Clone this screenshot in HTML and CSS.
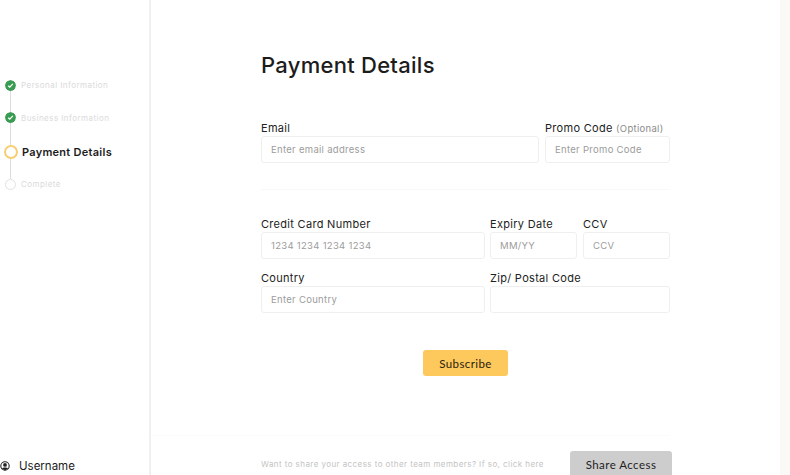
FILE: index.html
```html
<!DOCTYPE html>
<html lang="en">
<head>
<meta charset="utf-8">
<title>Payment Details</title>
<link rel="stylesheet" href="styles.css">
</head>
<body>
<div class="page">
  <aside class="sidebar">
    <ol class="steps">
      <li class="step step-done">
        <span class="dot-wrap"><svg class="check" viewBox="0 0 11 11" width="11" height="11"><circle cx="5.5" cy="5.5" r="5.5" fill="#3a9c52"/><path d="M3.2 5.7 4.8 7.2 7.8 3.9" fill="none" stroke="#fff" stroke-width="1.2"/></svg></span>
        <span class="step-text">Personal Information</span>
      </li>
      <li class="step step-done step-b">
        <span class="dot-wrap"><svg class="check" viewBox="0 0 11 11" width="11" height="11"><circle cx="5.5" cy="5.5" r="5.5" fill="#3a9c52"/><path d="M3.2 5.7 4.8 7.2 7.8 3.9" fill="none" stroke="#fff" stroke-width="1.2"/></svg></span>
        <span class="step-text">Business Information</span>
      </li>
      <li class="step step-active">
        <span class="dot-wrap"><span class="ring"></span></span>
        <span class="step-text">Payment Details</span>
      </li>
      <li class="step step-last">
        <span class="dot-wrap"><span class="ring-off"></span></span>
        <span class="step-text">Complete</span>
      </li>
    </ol>
    <div class="user">
      <svg viewBox="0 0 10 10" width="10" height="10"><circle cx="5" cy="5" r="4.2" fill="none" stroke="#222" stroke-width="1.1"/><circle cx="5" cy="3.9" r="1.9" fill="#222"/><path d="M1.9 7.6C3 6.2 7 6.2 8.1 7.6L5 9.2Z" fill="#222"/></svg>
      <span>Username</span>
    </div>
  </aside>
  <main class="main">
    <h1 class="title">Payment Details</h1>
    <div class="row row-a">
      <label class="field"><span class="label">Email</span><input class="input" placeholder="Enter email address"></label>
      <label class="field"><span class="label">Promo Code <em class="optional">(Optional)</em></span><input class="input" placeholder="Enter Promo Code"></label>
    </div>
    <hr class="divider">
    <div class="row row-b">
      <label class="field"><span class="label">Credit Card Number</span><input class="input" placeholder="1234 1234 1234 1234"></label>
      <label class="field"><span class="label">Expiry Date</span><input class="input" placeholder="MM/YY"></label>
      <label class="field"><span class="label">CCV</span><input class="input" placeholder="CCV"></label>
    </div>
    <div class="row row-c">
      <label class="field"><span class="label">Country</span><input class="input" placeholder="Enter Country"></label>
      <label class="field"><span class="label">Zip/ Postal Code</span><input class="input"></label>
    </div>
    <div class="submit-wrap"><button class="subscribe" type="button">Subscribe</button></div>
    <div class="share-rule"></div>
    <div class="share">
      <p class="share-text">Want to share your access to other team members? If so, click here</p>
      <button class="share-btn" type="button">Share Access</button>
    </div>
  </main>
  <div class="edge"></div>
</div>
</body>
</html>
```
FILE: styles.css
```css
* { box-sizing: border-box; }
html, body { margin: 0; height: 100%; overflow: hidden; background: #fff; }
body { font-family: Inter, "Liberation Sans", sans-serif; color: #1c1c1c; }
.page { display: flex; height: 475px; width: 790px; overflow: hidden; }

.sidebar { width: 151px; flex: none; border-right: 2px solid #f2f0ec; display: flex; flex-direction: column; justify-content: space-between; padding-top: 69px; }
.steps { list-style: none; margin: 0; padding: 0; }
.step { display: flex; align-items: center; height: 32px; position: relative; }
.step::after { content: ""; position: absolute; left: 10px; top: 22px; height: 22px; width: 1px; background: #dcdcdc; }
.step-last::after { display: none; }
.step-b { height: 33px; }
.step-active { height: 33px; margin-top: 1px; }
.step-last { height: 32px; }
.dot-wrap { width: 21px; flex: none; display: flex; justify-content: center; position: relative; z-index: 1; }
.check { display: block; background: #fff; border-radius: 50%; }
.step-text { font-size: 8px; letter-spacing: 0.45px; color: #dadada; white-space: nowrap; }
.step-active .step-text { font-size: 11px; font-weight: 600; letter-spacing: 0.27px; color: #1c1c1c; margin-left: 1px; }
.ring { width: 14px; height: 14px; border-radius: 50%; border: 2px solid #f6cf75; background: #fff; }
.ring-off { width: 11px; height: 11px; border-radius: 50%; border: 1px solid #e2e2e2; background: #fff; }
.user { display: flex; align-items: center; gap: 9px; height: 19px; font-size: 11.5px; color: #222; }

.main { width: 629px; flex: none; padding: 51px 110px 0; }
.title { margin: 0; font-size: 22px; line-height: 28px; font-weight: 500; letter-spacing: 0.27px; color: #1c1c1c; }
.row { display: grid; column-gap: 6px; }
.row-a { grid-template-columns: 278px 125px; margin-top: 41px; }
.row-b { grid-template-columns: 224px 87px 88px; column-gap: 5px; }
.row-b .field:last-child { margin-left: 1px; }
.row-c { grid-template-columns: 224px 180px; column-gap: 5px; margin-top: 11px; }
.field { display: flex; flex-direction: column; min-width: 0; }
.label { font-size: 11px; line-height: 16px; height: 16px; letter-spacing: 0.3px; color: #222; white-space: nowrap; }
.optional { font-style: normal; font-size: 9.5px; letter-spacing: 0.3px; color: #8b8b8b; }
.input { height: 27px; width: 100%; padding: 0 9px; border: 1px solid #efefef; border-radius: 3px; background: #fff; font: 400 9.5px Inter, sans-serif; letter-spacing: 0.3px; color: #333; outline: none; }
.input::placeholder { color: #9c9c9c; opacity: 1; }
.divider { border: 0; border-top: 1px solid #f8f8f6; margin: 26px 0 26px; }
.submit-wrap { display: flex; justify-content: center; margin-top: 37px; }
.subscribe { width: 85px; height: 26px; border: 0; border-radius: 3px; background: #fdc85c; font: 400 11.5px Lato, sans-serif; letter-spacing: 0.42px; color: #2b2210; padding: 0; }
.share-rule { border-top: 1px solid #fbfbfb; margin: 59px 0 0 -110px; }
.share { display: flex; align-items: center; margin-top: 15px; }
.share-text { margin: 0; width: 309px; flex: none; font-size: 8px; letter-spacing: 0.43px; color: #c4c4c4; white-space: nowrap; }
.share-btn { width: 102px; height: 26px; flex: none; border: 0; border-radius: 3px 3px 0 0; background: #cdcdcd; font: 400 11.5px Lato, sans-serif; letter-spacing: 0.45px; color: #222; padding: 0; }
.edge { flex: 1; background: #faf9f5; }
```
